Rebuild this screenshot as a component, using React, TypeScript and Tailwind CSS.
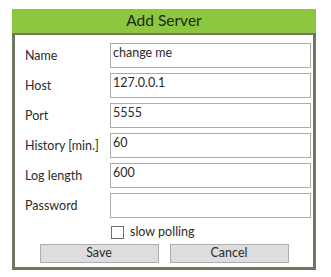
const FIELDS = [
  { label: "Name", value: "change me" },
  { label: "Host", value: "127.0.0.1" },
  { label: "Port", value: "5555" },
  { label: "History [min.]", value: "60" },
  { label: "Log length", value: "600" },
  { label: "Password", value: "" },
];

export default function App() {
  return (
    <div className="w-[331px] h-[277px] bg-white pt-[9px] pl-[12px] font-['Lato',sans-serif] text-[#2b2b2b]">
      <div className="w-[304px]">
        <div className="h-[24px] bg-[#8dc63f] flex items-center justify-center text-[15.5px] leading-none text-[#1e2a14]">
          Add Server
        </div>
        <div className="border-[3px] border-t-2 border-[#6f7763] bg-white pt-[8px] pb-[4px]">
          <div className="flex flex-col gap-[5px]">
            {FIELDS.map((f) => (
              <div key={f.label} className="flex items-center h-[25px]">
                <div className="w-[95px] pl-[10px] text-[12.5px] pt-[2px]">{f.label}</div>
                <div className="flex-1 mr-[2px] h-[25px] border border-[#ababab] px-[2px] pt-[1px] text-[12.5px] leading-[16px]">
                  {f.value}
                </div>
              </div>
            ))}
          </div>
          <div className="flex items-center h-[13px] mt-[8px] pl-[96px] text-[12.5px]">
            <span className="w-[13px] h-[13px] border border-[#707070] bg-white" />
            <span className="ml-[6px] leading-none">slow polling</span>
          </div>
          <div className="flex justify-center gap-[11px] mt-[5px]">
            <button className="w-[119px] h-[19px] bg-[#dddddd] border border-[#adadad] text-[12.5px] leading-none">
              Save
            </button>
            <button className="w-[119px] h-[19px] bg-[#dddddd] border border-[#adadad] text-[12.5px] leading-none">
              Cancel
            </button>
          </div>
        </div>
      </div>
    </div>
  );
}
